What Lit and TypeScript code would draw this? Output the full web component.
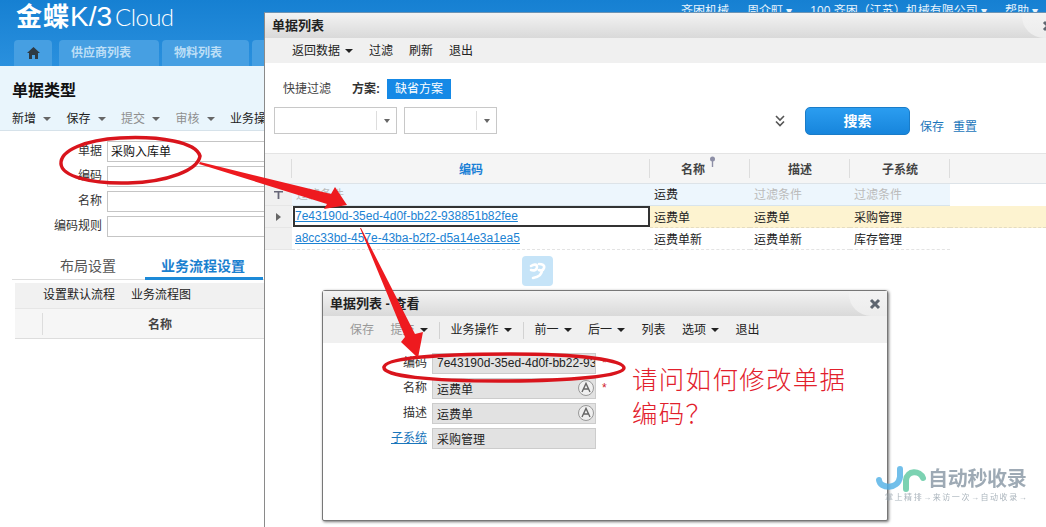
import { LitElement, html, css, svg } from "lit";
import { customElement } from "lit/decorators.js";

const caret = html`<i class="caret"></i>`;
const closeIcon = html`<svg class="close" width="12" height="12" viewBox="0 0 12 12"><path d="M2 2l8 8M10 2l-8 8" stroke="#5e6670" stroke-width="3" fill="none"/></svg>`;
const aIcon = html`<svg class="a-icon" width="18" height="18" viewBox="0 0 18 18"><circle cx="9" cy="9" r="7.5" fill="#f0f0f0" stroke="#999"/><path d="M5 13L9 4.5 13 13M6.5 10h5" stroke="#666" stroke-width="1.4" fill="none"/></svg>`;

@customElement("app-root")
export class AppRoot extends LitElement {
  static styles = css`
    :host { display: block; position: relative; width: 1046px; height: 527px; overflow: hidden; background: #fff;
      font: 12px/1.2 "Liberation Sans", "Noto Sans CJK SC", sans-serif; color: #222; }
    * { box-sizing: border-box; }
    .header { height: 66px; background: linear-gradient(#1680d2, #2a90de); position: relative; padding-left: 14px; display: flex; flex-direction: column; }
    .brand { height: 40px; display: flex; align-items: baseline; color: #fff; padding: 0 0 0 2px; line-height: 36px; margin-top: -3px; margin-bottom: 3px; }
    .brand b { font-size: 26px; letter-spacing: 1px; font-family: "Noto Sans CJK SC", sans-serif; }
    .brand span { font-size: 28px; letter-spacing: 0; }
    .brand em { font: 300 24px "Lato", sans-serif; margin-left: 3px; letter-spacing: -.6px; }
    .top-links { position: absolute; left: 681px; top: 4px; color: #e7f3fc; display: flex; gap: 18px; white-space: nowrap; }
    .tabs { display: flex; gap: 3px; height: 26px; }
    .tab { background: #469fe2; border-radius: 4px 4px 0 0; color: #bcdef6; font-weight: 700; font-size: 12px; display: flex; align-items: center; padding-left: 12px; height: 26px; }
    .tab.home { width: 38px; padding-left: 13px; margin-right: 4px; background: #469fe2; }
    .tab.t1 { width: 100px; } .tab.t2 { width: 87px; } .tab.t3 { width: 60px; }

    .sub { height: 65px; background: #e9f5fc; border-bottom: 1px solid #d6e2ea; padding: 14px 0 0 12px; }
    .sub h1 { margin: 0; font-size: 16px; line-height: 21px; font-weight: 700; color: #111; }
    .sub-tools { display: flex; margin-top: 8px; height: 20px; align-items: center; gap: 15.5px; color: #222; white-space: nowrap; }
    .sub-tools span { display: inline-flex; align-items: center; gap: 7px; }
    .sub-tools .muted { color: #8f8f8f; }
    .sub-tools .caret { border-top-color: #666; }

    .form { padding: 10px 0 0; display: flex; flex-direction: column; gap: 4px; width: 300px; }
    .row { display: flex; gap: 5px; height: 21px; align-items: center; }
    .row label { width: 102px; text-align: right; color: #333; }
    .row .inp { flex: 1; height: 21px; border: 1px solid #c5c5c5; padding-left: 3px; line-height: 20px; color: #111; }

    .ltabs { width: 262px; margin: 17px 0 0 12px; height: 26px; border-bottom: 1px solid #ddd; display: flex; font-size: 14px; position: relative; }
    .ltabs span { line-height: 24px; color: #555; }
    .ltabs .one { margin-left: 48px; }
    .ltabs .two { margin-left: 29px; color: #1a80cf; font-weight: 700; border-bottom: 3px solid #1d8ad8; height: 26px; padding: 0 17px 0 16px; width: 118px; white-space: nowrap; }
    .ltool { margin: 3px 0 0 15px; width: 250px; height: 25px; background: #f1f1f1; display: flex; gap: 16px; padding-left: 28px; align-items: center; }
    .lgrid { margin-left: 15px; width: 250px; height: 31px; background: #f6f6f6; border-bottom: 1px solid #ddd; border-top: 1px solid #e6e6e6; display: grid; grid-template-columns: 27px 1fr; align-items: center; }
    .lgrid b { border-left: 1px solid #ddd; height: 22px; line-height: 24px; padding-left: 105px; color: #444; }

    .win { position: absolute; background: #fff; }
    .w1 { left: 264px; top: 12px; width: 782px; height: 515px; border-left: 1px solid #8a8a8a; border-top: 1px solid #6d93b3; }
    .w2 { left: 322px; top: 290px; width: 566px; height: 231px; border: 1px solid #777; border-radius: 3px 3px 2px 2px; box-shadow: 1px 1px 3px rgba(0,0,0,.55); }
    .title { height: 25px; background: linear-gradient(#f3f3f3, #d9d9d9); display: flex; justify-content: space-between; align-items: stretch; font-weight: 700; font-size: 13px; color: #222; padding-left: 7px; line-height: 26px; }
    .notch { width: 38px; background: linear-gradient(#f3f3f3, #ececec); border-bottom-left-radius: 22px; display: flex; align-items: center; justify-content: flex-end; padding-right: 6px; }
    .w1 .notch { width: 24px; padding-right: 0; }
    .w1 .close { margin-right: -8px; }
    .toolbar { height: 25px; background: #f0f0f0; display: flex; align-items: center; white-space: nowrap; padding-top: 1px; }
    .w1 .toolbar { padding-left: 27px; gap: 16px; }
    .w2 .toolbar { height: 27px; padding-left: 27px; gap: 16.5px; }
    .toolbar span { display: inline-flex; align-items: center; gap: 5px; }
    .toolbar .muted { color: #999; }
    .toolbar .sep { width: 1px; height: 17px; background: #d2d2d2; margin: 0 -5.5px; }
    .caret { display: inline-block; width: 0; height: 0; border: 4px solid transparent; border-top: 4px solid #222; border-bottom: 0; }

    .quick { display: flex; align-items: center; height: 20px; margin-top: 16px; padding-left: 18px; }
    .quick .lbl { width: 69px; color: #444; }
    .quick b { width: 35px; color: #333; }
    .chip { width: 64px; height: 20px; background: #1589e6; color: #fff; display: flex; align-items: center; justify-content: center; }
    .search { display: flex; height: 28px; margin-top: 8px; padding-left: 9px; align-items: stretch; }
    .select { height: 27px; border: 1px solid #c8c8c8; display: flex; justify-content: flex-end; align-items: center; }
    .select i { width: 20px; height: 19px; border-left: 1px solid #ddd; display: flex; align-items: center; justify-content: center; }
    .select i::after { content: ""; border: 3.5px solid transparent; border-top: 4px solid #666; border-bottom: 0; }
    .s1 { width: 123px; margin-right: 7px; } .s2 { width: 93px; }
    .chev { width: 10px; margin: 0 20px 0 278px; align-self: center; }
    .btn { width: 105px; height: 28px; border-radius: 5px; background: linear-gradient(#2b9df0, #1785dc); border: 1px solid #1a7cc8; color: #fff; font-weight: 700; font-size: 14px; display: flex; align-items: center; justify-content: center; }
    .links { display: flex; gap: 9px; margin-left: 10px; color: #1b76bb; align-items: flex-end; line-height: 15px; padding-top: 13px; }

    .grid { margin-top: 18px; display: grid; grid-template-columns: 27px 358px 100px 100px 100px 96px; }
    .grid > div { height: 22px; display: flex; align-items: center; padding-left: 4px; color: #222; white-space: nowrap; }
    .h { height: 31px !important; background: #f5f5f5; border-top: 1px solid #e4e4e4; border-bottom: 1px solid #dde3e8; justify-content: center; padding: 3px 0 0 !important; font-weight: 700; color: #444 !important; position: relative; }
    .h.sepd::after { content: ""; position: absolute; right: 0; top: 5px; bottom: 5px; width: 1px; background: #ddd; }
    .h.code { color: #1a80d6 !important; }
    .h.name { padding-right: 14px !important; }
    .pin { position: absolute; left: 58px; top: 2px; }
    .g { background: #f0f0f0; border-bottom: 1px solid #e6e6e6; justify-content: center; padding-left: 0 !important; }
    .f { background: #edf6fd; border-bottom: 1px solid #d8e4ec; padding-top: 2px; }
    .hint { color: #bbb !important; }
    .y { background: #fdf3d0; border-bottom: 1px dashed #e5dcc0; padding-top: 3px; }
    .n { border-bottom: 1px dashed #e3e3e3; padding-top: 3px; }
    .n.code { padding-top: 0; padding-left: 3px !important; }
    .sel { border: 2px solid #333; background: #fff; margin-left: 1px; height: 21px !important; padding-left: 0 !important; }
    a { color: #1b82d3; text-decoration: underline; }
    .plain { background: #fff; }
    .arrow-r { border: 4px solid transparent; border-left: 5px solid #666; border-right: 0; }

    .vform { padding-top: 10px; display: flex; flex-direction: column; gap: 4px; }
    .vrow { display: flex; height: 21px; align-items: center; gap: 5px; }
    .vrow label { width: 104px; text-align: right; color: #333; }
    .vrow label.lk { color: #1b76bb; text-decoration: underline; }
    .val { width: 164px; height: 21px; background: #e2e2e2; border: 1px solid #ccc; padding-left: 4px; line-height: 22px; position: relative; overflow: hidden; white-space: nowrap; color: #222; }
    .val.latin { line-height: 19px; }
    .a-icon { position: absolute; right: 0; top: 0; }
    .star { color: #d0202a; margin-left: 1px; }

    .float { position: absolute; left: 522px; top: 256px; width: 31px; height: 30px; border-radius: 4px; background: #c6e4f8; display: flex; align-items: center; justify-content: center; }
    .overlay { position: absolute; left: 0; top: 0; pointer-events: none; }
    .ask { position: absolute; left: 632px; top: 363px; width: 225px; font-size: 25.5px; line-height: 34px; color: #e2202c; letter-spacing: 1.3px; font-weight: 300; }
    .mark { position: absolute; left: 876px; top: 465px; width: 165px; filter: blur(.5px); opacity: .8; }
    .mark-top { display: flex; align-items: center; gap: 1px; height: 28px; }
    .mark-top b { font-size: 20px; color: #8796a3; letter-spacing: -.3px; font-weight: 700; }
    .mark-sub { font-size: 8px; color: #97a3ad; letter-spacing: 1.55px; margin: 0 0 0 9px; white-space: nowrap; }
  `;

  render() {
    return html`
      <div class="header">
        <div class="brand"><b>金蝶</b><span>K/3</span><em>Cloud</em></div>
        <div class="top-links"><span>齐困机械</span><span>周介町 ▾</span><span>100 齐困（江苏）机械有限公司 ▾</span><span>帮助 ▾</span></div>
        <div class="tabs">
          <div class="tab home"><svg width="13" height="12" viewBox="0 0 13 12"><path d="M6.5 0L13 6h-2v6H8V8H5v4H2V6H0z" fill="#2e3a44"/></svg></div>
          <div class="tab t1">供应商列表</div><div class="tab t2">物料列表</div><div class="tab t3"></div>
        </div>
      </div>
      <div class="sub">
        <h1>单据类型</h1>
        <div class="sub-tools">
          <span>新增${caret}</span><span>保存${caret}</span><span class="muted">提交${caret}</span><span class="muted">审核${caret}</span><span>业务操作</span>
        </div>
      </div>
      <div class="form">
        <div class="row"><label>单据</label><div class="inp">采购入库单</div></div>
        <div class="row"><label>编码</label><div class="inp"></div></div>
        <div class="row"><label>名称</label><div class="inp"></div></div>
        <div class="row"><label>编码规则</label><div class="inp"></div></div>
      </div>
      <div class="ltabs"><span class="one">布局设置</span><span class="two">业务流程设置</span></div>
      <div class="ltool"><span>设置默认流程</span><span>业务流程图</span></div>
      <div class="lgrid"><span></span><b>名称</b></div>

      <div class="win w1">
        <div class="title"><span>单据列表</span><div class="notch">${closeIcon}</div></div>
        <div class="toolbar"><span>返回数据${caret}</span><span>过滤</span><span>刷新</span><span>退出</span></div>
        <div class="quick"><span class="lbl">快捷过滤</span><b>方案:</b><div class="chip">缺省方案</div></div>
        <div class="search">
          <div class="select s1"><i></i></div><div class="select s2"><i></i></div>
          <svg class="chev" width="10" height="12" viewBox="0 0 10 12"><path d="M1 1l4 4 4-4M1 6.5l4 4 4-4" stroke="#555" stroke-width="1.6" fill="none"/></svg>
          <div class="btn">搜索</div>
          <div class="links"><span>保存</span><span>重置</span></div>
        </div>
        <div class="grid">
          <div class="h sepd"></div>
          <div class="h sepd code">编码</div>
          <div class="h sepd name">名称<svg class="pin" width="9" height="11" viewBox="0 0 9 11"><circle cx="4.5" cy="3" r="2.5" fill="#8d8fa6"/><path d="M4.5 5v6" stroke="#8d8fa6" stroke-width="1.4"/></svg></div>
          <div class="h sepd">描述</div>
          <div class="h sepd">子系统</div>
          <div class="h"></div>

          <div class="g"><svg width="9" height="8" viewBox="0 0 9 8"><path d="M0 0h9v1.6H5.4V8H3.6V1.6H0z" fill="#667"/></svg></div>
          <div class="f hint">过滤条件</div><div class="f">运费</div><div class="f hint">过滤条件</div><div class="f hint">过滤条件</div><div class="plain"></div>

          <div class="g"><i class="arrow-r"></i></div>
          <div class="sel"><a>7e43190d-35ed-4d0f-bb22-938851b82fee</a></div><div class="y">运费单</div><div class="y">运费单</div><div class="y">采购管理</div><div class="y"></div>

          <div class="g"></div>
          <div class="n code"><a>a8cc33bd-457e-43ba-b2f2-d5a14e3a1ea5</a></div><div class="n">运费单新</div><div class="n">运费单新</div><div class="n">库存管理</div><div class="plain"></div>
        </div>
      </div>

      <div class="float"><svg width="20" height="20" viewBox="0 0 20 20"><path d="M3 5c3-2 6-2 6 1s-3 4-6 3M11 3c3 0 6 1 5 4s-3 3-5 2M14 9c0 4-3 7-9 8" stroke="#fff" stroke-width="2.6" fill="none" stroke-linecap="round"/></svg></div>

      <div class="win w2">
        <div class="title"><span>单据列表 - 查看</span><div class="notch">${closeIcon}</div></div>
        <div class="toolbar">
          <span class="muted">保存</span><span class="muted">提交${caret}</span><i class="sep"></i>
          <span>业务操作${caret}</span><i class="sep"></i>
          <span>前一${caret}</span><span>后一${caret}</span><span>列表</span><span>选项${caret}</span><span>退出</span>
        </div>
        <div class="vform">
          <div class="vrow"><label>编码</label><div class="val latin">7e43190d-35ed-4d0f-bb22-938851b82fee</div><span class="star">*</span></div>
          <div class="vrow"><label>名称</label><div class="val">运费单${aIcon}</div><span class="star">*</span></div>
          <div class="vrow"><label>描述</label><div class="val">运费单${aIcon}</div></div>
          <div class="vrow"><label class="lk">子系统</label><div class="val">采购管理</div></div>
        </div>
      </div>

      <div class="ask">请问如何修改单据编码？</div>

      <svg class="overlay" width="1046" height="527" viewBox="0 0 1046 527">
        ${svg`
          <path d="M200 156C196 142 160 136 120 138 86 140 60 150 61 164 62 176 90 184 128 183 168 182 198 170 200 156Z" fill="none" stroke="#d9141c" stroke-width="3.5"/>
          <path d="M200 162L199 164 327 204 324 209 347 205 335 187 331 194Z" fill="#ee1a1f"/>
          <path d="M384 367C386 358 440 354 510 354 580 354 624 360 624 368 624 376 570 381 500 381 430 381 382 376 384 367Z" fill="none" stroke="#d9141c" stroke-width="3.5"/>
          <path d="M360 228L405 337 401 342 418 358 423 332 415 334 361 228Z" fill="#ee1a1f"/>
        `}
      </svg>

      <div class="mark">
        <div class="mark-top">
          <svg width="51" height="26" viewBox="0 0 51 26"><path d="M3 14c1 9 19 10 21 -3V3" stroke="#4fb0e6" stroke-width="6" fill="none" stroke-linecap="round"/><path d="M30 23V14c1-10 14-10 17-2" stroke="#5cc8a0" stroke-width="6" fill="none" stroke-linecap="round"/></svg>
          <b>自动秒收录</b>
        </div>
        <div class="mark-sub">掌上精排→来访一次→自动收录→</div>
      </div>
    `;
  }
}
